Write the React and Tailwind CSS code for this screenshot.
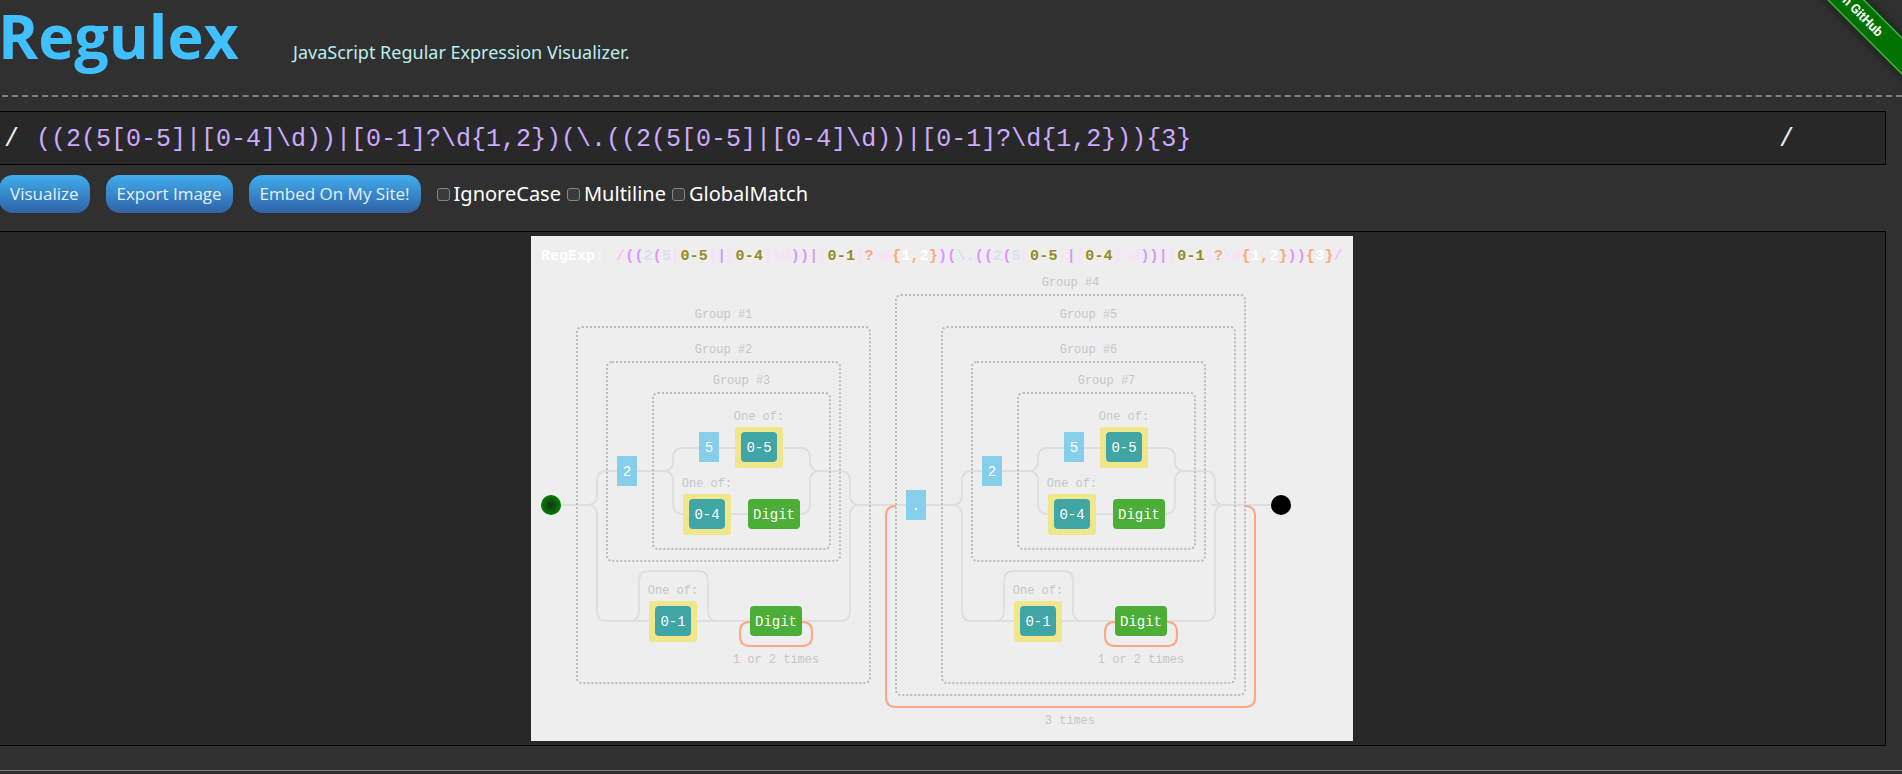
import { Fragment } from "react";

const REGEX = "((2(5[0-5]|[0-4]\\d))|[0-1]?\\d{1,2})(\\.((2(5[0-5]|[0-4]\\d))|[0-1]?\\d{1,2})){3}";

const C = {
  white: "#ffffff",
  slash: "#ffbbff",
  paren: "#dd96ff",
  literal: "#dddff2",
  bracket: "#fddffa",
  range: "#938c22",
  repeat: "#ffa782",
};

const inner = [
  ["((", C.paren], ["2", C.literal], ["(", C.paren], ["5", C.literal],
  ["[", C.bracket], ["0-5", C.range], ["]", C.bracket], ["|", C.paren],
  ["[", C.bracket], ["0-4", C.range], ["]", C.bracket], ["\\d", C.bracket],
  ["))", C.paren], ["|", C.paren], ["[", C.bracket], ["0-1", C.range],
  ["]", C.bracket], ["?", C.repeat], ["\\d", C.bracket], ["{", C.repeat],
  ["1", C.white], [",", C.repeat], ["2", C.white], ["}", C.repeat], [")", C.paren],
];

const tokens = [
  ["/", C.slash], ...inner, ["(", C.paren], ["\\.", C.literal], ...inner,
  [")", C.paren], ["{", C.repeat], ["3", C.white], ["}", C.repeat], ["/", C.slash],
];

const PITCH = 9.2;
let column = 0;
const placed = tokens.flatMap(([text, color]) =>
  [...text].map((ch) => ({ ch, color, x: 85 + PITCH * column++ }))
);

function Caption({ x, y, children }) {
  return (
    <text x={x} y={y} textAnchor="middle" fill="#c6c6c6" fontSize="12">
      {children}
    </text>
  );
}

function Frame({ x, y, w, h, label }) {
  return (
    <g>
      <rect x={x} y={y} width={w} height={h} rx="5" fill="none" stroke="#bdbdbd" strokeWidth="2" strokeDasharray="2 2" />
      <Caption x={x + w / 2} y={y - 9}>{label}</Caption>
    </g>
  );
}

function Literal({ x, y, children }) {
  return (
    <g>
      <rect x={x} y={y} width="20" height="30" fill="#87ceeb" />
      <text x={x + 10} y={y + 20} textAnchor="middle" fill="#fff" fontSize="14">{children}</text>
    </g>
  );
}

function OneOf({ x, y, children }) {
  return (
    <g>
      <Caption x={x + 24} y={y - 7}>One of:</Caption>
      <rect x={x} y={y} width="48" height="41" rx="3" fill="#f0e68c" />
      <rect x={x + 6} y={y + 5} width="36" height="30" rx="4" fill="#40a5a5" />
      <text x={x + 24} y={y + 25} textAnchor="middle" fill="#fff" fontSize="14">{children}</text>
    </g>
  );
}

function Digit({ x, y }) {
  return (
    <g>
      <rect x={x} y={y} width="52" height="30" rx="4" fill="#4bae37" />
      <text x={x + 26} y={y + 20} textAnchor="middle" fill="#fff" fontSize="14">Digit</text>
    </g>
  );
}

function Octet({ dx, first }) {
  return (
    <g transform={`translate(${dx} 0)`}>
      <g fill="none" stroke="#dfdfdf" strokeWidth="2">
        <path d="M46 269H56Q66 269 66 259V245Q66 235 76 235H132Q142 235 142 225V222Q142 212 152 212H269Q279 212 279 222V225Q279 235 289 235H309Q319 235 319 245V259Q319 269 329 269H355" />
        <path d="M56 269Q66 269 66 279V375Q66 385 76 385H309Q319 385 319 375V279Q319 269 329 269" />
        <path d="M132 235Q142 235 142 245V268Q142 278 152 278H269Q279 278 279 268V245Q279 235 289 235" />
        <path d="M98 385Q108 385 108 375V345Q108 335 118 335H167Q177 335 177 345V375Q177 385 187 385" />
      </g>
      <Frame x={46} y={91} w={293} h={356} label={`Group #${first}`} />
      <Frame x={76} y={126} w={233} h={199} label={`Group #${first + 1}`} />
      <Frame x={122} y={157} w={177} h={156} label={`Group #${first + 2}`} />
      <Literal x={86} y={220}>2</Literal>
      <Literal x={168} y={196}>5</Literal>
      <OneOf x={204} y={191}>0-5</OneOf>
      <OneOf x={152} y={258}>0-4</OneOf>
      <Digit x={217} y={263} />
      <OneOf x={118} y={365}>0-1</OneOf>
      <path d="M219 386Q209 386 209 396V400Q209 410 219 410H271Q281 410 281 400V396Q281 386 271 386" fill="none" stroke="#ffa586" strokeWidth="2" />
      <Digit x={219} y={370} />
      <Caption x={245} y={427}>1 or 2 times</Caption>
    </g>
  );
}

function Diagram() {
  return (
    <svg
      width="822"
      height="505"
      viewBox="0 0 822 505"
      role="img"
      aria-label="Railroad diagram of the regular expression"
      className="block max-w-full bg-[#eeeeee] font-['Liberation_Mono',monospace]"
    >
      <defs>
        <radialGradient id="start">
          <stop offset="0" stopColor="#1a2e1a" />
          <stop offset="1" stopColor="#008000" />
        </radialGradient>
      </defs>
      <g fontSize="15" fontWeight="700">
        <text x="10" y="24" fill="#fff">RegExp:</text>
        {placed.map((t, i) => (
          <text key={i} x={t.x} y="24" fill={t.color}>{t.ch}</text>
        ))}
      </g>
      <path d="M30 269H60M354 269H420M680 269H740" stroke="#dfdfdf" strokeWidth="2" />
      <Octet dx={0} first={1} />
      <Octet dx={365} first={5} />
      <Frame x={365} y={59} w={349} h={400} label="Group #4" />
      <path d="M365 270Q355 270 355 280V461Q355 471 365 471H714Q724 471 724 461V280Q724 270 714 270" fill="none" stroke="#ffa586" strokeWidth="2" />
      <Caption x={539} y={488}>3 times</Caption>
      <Literal x={375} y={254}>.</Literal>
      <circle cx="20" cy="269" r="10" fill="url(#start)" />
      <circle cx="750" cy="269" r="10" fill="#000" />
    </svg>
  );
}

function PillButton({ children }) {
  return (
    <button
      type="button"
      className="h-[38px] rounded-[14px] bg-linear-to-b from-[#40aeee] to-[#2f62a6] px-[11px] font-['Open_Sans',sans-serif] text-[17px] text-[#e4f1ff]"
    >
      {children}
    </button>
  );
}

function Flag({ id, children }) {
  return (
    <Fragment>
      <input id={id} type="checkbox" className="size-[13px] appearance-none rounded-[3px] border border-[#858585] bg-[#3b3b3b]" />
      <label htmlFor={id} className="mr-[6px] ml-1 text-xl text-white">{children}</label>
    </Fragment>
  );
}

export default function App() {
  return (
    <div className="relative min-h-screen overflow-hidden bg-[#303030] font-['Noto_Sans',sans-serif]">
      <header className="-ml-2 flex h-[97px] items-baseline border-b-2 border-dashed border-[#808080] pl-[6px]">
        <h1 className="w-[295px] font-['Open_Sans',sans-serif] text-[61px] leading-[72px] font-bold text-[#40c0ff]">Regulex</h1>
        <p className="text-lg text-[#bbeeee]">JavaScript Regular Expression Visualizer.</p>
      </header>

      <a
        href="#github"
        className="absolute -top-[18px] -right-[60px] flex h-7 w-[240px] rotate-45 items-center bg-[#007200] font-['Roboto',sans-serif] text-[13px] font-bold text-white shadow-[0_0_10px_rgba(0,0,0,0.5)]"
      >
        <span className="w-full border-y border-[#70b070] text-center leading-6">Fork me on GitHub</span>
      </a>

      <main className="mr-4 -ml-px">
        <div className="mt-[14px] flex h-[54px] items-center border-y border-r border-black bg-[#282828] pt-1 pl-[5px] font-['Liberation_Mono',monospace] text-[25px]">
          <span className="w-8 text-[#eeeeee]">/</span>
          <input
            aria-label="Regular expression"
            defaultValue={REGEX}
            className="min-w-0 flex-1 bg-transparent text-[#ccaaff] outline-none"
          />
          <span className="w-[106px] text-[#eeeeee]">/</span>
        </div>

        <div className="flex h-[66px] items-center pb-2">
          <div className="mr-4 flex gap-4">
            <PillButton>Visualize</PillButton>
            <PillButton>Export Image</PillButton>
            <PillButton>Embed On My Site!</PillButton>
          </div>
          <Flag id="ignore">IgnoreCase</Flag>
          <Flag id="multiline">Multiline</Flag>
          <Flag id="global">GlobalMatch</Flag>
        </div>

        <div className="flex justify-center border-y border-r border-black bg-[#282828] py-1">
          <Diagram />
        </div>
      </main>

      <footer className="mt-6 border-t border-[#808080]" />
    </div>
  );
}
